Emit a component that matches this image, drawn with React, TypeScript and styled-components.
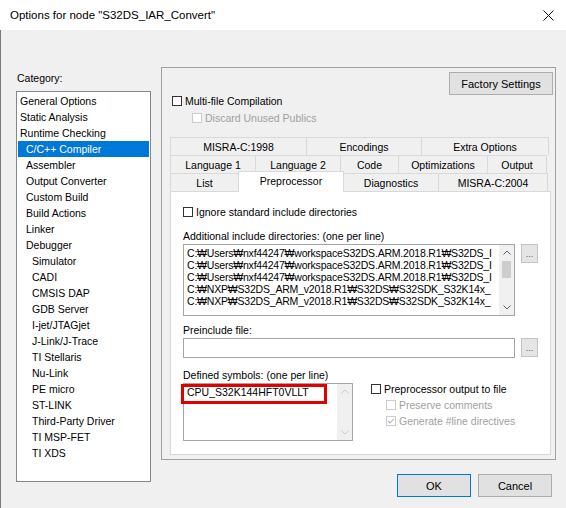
import styled, { createGlobalStyle } from 'styled-components';

const GlobalStyle = createGlobalStyle`
    html, body {
        margin: 0;
        padding: 0;
        background: #f0f0f0;
    }

    body {
        font-family: "Liberation Sans", Arial, "DejaVu Sans", sans-serif;
        font-size: 10.5px;
        color: #000;
    }
`;

interface ICategory {
    label: string;
    level: number;
    selected?: boolean;
}

const categories: ICategory[] = [
    { label: 'General Options', level: 0 },
    { label: 'Static Analysis', level: 0 },
    { label: 'Runtime Checking', level: 0 },
    { label: 'C/C++ Compiler', level: 1, selected: true },
    { label: 'Assembler', level: 1 },
    { label: 'Output Converter', level: 1 },
    { label: 'Custom Build', level: 1 },
    { label: 'Build Actions', level: 1 },
    { label: 'Linker', level: 1 },
    { label: 'Debugger', level: 1 },
    { label: 'Simulator', level: 2 },
    { label: 'CADI', level: 2 },
    { label: 'CMSIS DAP', level: 2 },
    { label: 'GDB Server', level: 2 },
    { label: 'I-jet/JTAGjet', level: 2 },
    { label: 'J-Link/J-Trace', level: 2 },
    { label: 'TI Stellaris', level: 2 },
    { label: 'Nu-Link', level: 2 },
    { label: 'PE micro', level: 2 },
    { label: 'ST-LINK', level: 2 },
    { label: 'Third-Party Driver', level: 2 },
    { label: 'TI MSP-FET', level: 2 },
    { label: 'TI XDS', level: 2 },
];

interface ITab {
    label: string;
    width: number;
    selected?: boolean;
}

const tabRows: ITab[][] = [
    [
        { label: 'MISRA-C:1998', width: 137 },
        { label: 'Encodings', width: 116 },
        { label: 'Extra Options', width: 128 },
    ],
    [
        { label: 'Language 1', width: 86 },
        { label: 'Language 2', width: 86 },
        { label: 'Code', width: 59 },
        { label: 'Optimizations', width: 90 },
        { label: 'Output', width: 60 },
    ],
    [
        { label: 'List', width: 69 },
        { label: 'Preprocessor', width: 106, selected: true },
        { label: 'Diagnostics', width: 96 },
        { label: 'MISRA-C:2004', width: 110 },
    ],
];

// only the part that is visible before the scroll bar
const includeDirs = [
    'C:₩Users₩nxf44247₩workspaceS32DS.ARM.2018.R1₩S32DS_I',
    'C:₩Users₩nxf44247₩workspaceS32DS.ARM.2018.R1₩S32DS_I',
    'C:₩Users₩nxf44247₩workspaceS32DS.ARM.2018.R1₩S32DS_I',
    'C:₩NXP₩S32DS_ARM_v2018.R1₩S32DS₩S32SDK_S32K14x_',
    'C:₩NXP₩S32DS_ARM_v2018.R1₩S32DS₩S32SDK_S32K14x_',
];

function Chevron({ up, color }: { up?: boolean; color: string }) {
    return (
        <svg width="8" height="5" viewBox="0 0 8 5">
            <path
                d={up ? 'M0.5 4.5 L4 1 L7.5 4.5' : 'M0.5 0.5 L4 4 L7.5 0.5'}
                fill="none"
                stroke={color}
                strokeWidth="1"
            />
        </svg>
    );
}

function CheckBox({
    label,
    checked,
    disabled,
}: {
    label: string;
    checked?: boolean;
    disabled?: boolean;
}) {
    return (
        <CheckRow $disabled={disabled}>
            <Box $disabled={disabled}>
                {checked && (
                    <svg width="8" height="8" viewBox="0 0 8 8">
                        <path
                            d="M1 4 L3 6 L7 1.5"
                            fill="none"
                            stroke={disabled ? '#b5b5b5' : '#222'}
                            strokeWidth="1.1"
                        />
                    </svg>
                )}
            </Box>
            <span>{label}</span>
        </CheckRow>
    );
}

function ScrollBar({ disabled }: { disabled?: boolean }) {
    const color = disabled ? '#c8c8c8' : '#606060';
    return (
        <Scroll>
            <ScrollArrow>
                <Chevron up color={color} />
            </ScrollArrow>
            <ScrollTrack>{!disabled && <Thumb />}</ScrollTrack>
            <ScrollArrow>
                <Chevron color={color} />
            </ScrollArrow>
        </Scroll>
    );
}

function App() {
    return (
        <Window>
            <GlobalStyle />
            <TitleBar>
                <span>Options for node "S32DS_IAR_Convert"</span>
                <CloseButton>
                    <svg width="11" height="11" viewBox="0 0 11 11">
                        <path d="M0.5 0.5 L10.5 10.5 M10.5 0.5 L0.5 10.5" stroke="#111" strokeWidth="1" />
                    </svg>
                </CloseButton>
            </TitleBar>
            <Body>
                <LeftColumn>
                    <CategoryLabel>Category:</CategoryLabel>
                    <CategoryList>
                        {categories.map(c => (
                            <CategoryItem key={c.label} $level={c.level} $selected={c.selected}>
                                {c.label}
                            </CategoryItem>
                        ))}
                    </CategoryList>
                </LeftColumn>
                <RightColumn>
                    <GroupBox>
                        <TopBar>
                            <Button $w={104}>Factory Settings</Button>
                        </TopBar>
                        <MultiFileRow>
                            <CheckBox label="Multi-file Compilation" />
                        </MultiFileRow>
                        <DiscardRow>
                            <CheckBox label="Discard Unused Publics" disabled />
                        </DiscardRow>
                        <Tabs>
                            {tabRows.map((row, i) => (
                                <TabRow key={i}>
                                    {row.map(t => (
                                        <Tab key={t.label} $w={t.width} $selected={t.selected}>
                                            {t.label}
                                        </Tab>
                                    ))}
                                </TabRow>
                            ))}
                            <TabPage>
                                <IgnoreRow>
                                    <CheckBox label="Ignore standard include directories" />
                                </IgnoreRow>
                                <FieldLabel $top={11}>Additional include directories: (one per line)</FieldLabel>
                                <FieldRow>
                                    <TextArea $w={332} $h={72}>
                                        <Lines $tight>
                                            {includeDirs.map((d, i) => (
                                                <Line key={i}>{d}</Line>
                                            ))}
                                        </Lines>
                                        <ScrollBar />
                                    </TextArea>
                                    <DotsButton>...</DotsButton>
                                </FieldRow>
                                <FieldLabel $top={8}>Preinclude file:</FieldLabel>
                                <FieldRow>
                                    <TextArea $w={332} $h={20} />
                                    <DotsButton>...</DotsButton>
                                </FieldRow>
                                <FieldLabel $top={11}>Defined symbols: (one per line)</FieldLabel>
                                <SymbolsRow>
                                    <TextArea $w={170} $h={58}>
                                        <Lines>
                                            <Line>CPU_S32K144HFT0VLLT</Line>
                                        </Lines>
                                        <ScrollBar disabled />
                                        <Highlight />
                                    </TextArea>
                                    <OutputOptions>
                                        <CheckBox label="Preprocessor output to file" />
                                        <SubOption>
                                            <CheckBox label="Preserve comments" disabled />
                                        </SubOption>
                                        <SubOption>
                                            <CheckBox label="Generate #line directives" checked disabled />
                                        </SubOption>
                                    </OutputOptions>
                                </SymbolsRow>
                            </TabPage>
                        </Tabs>
                    </GroupBox>
                    <Footer>
                        <Button $w={74} $default>OK</Button>
                        <Button $w={74}>Cancel</Button>
                    </Footer>
                </RightColumn>
            </Body>
        </Window>
    );
}

export default App;

const Window = styled.div`
    width: 566px;
    height: 508px;
    overflow: hidden;
    background: #f0f0f0;
`;

const TitleBar = styled.div`
    height: 30px;
    display: flex;
    align-items: center;
    justify-content: space-between;
    padding-left: 10px;
    background: #fff;
    font-size: 11.5px;
    color: #000;
`;

const CloseButton = styled.div`
    width: 36px;
    height: 30px;
    display: flex;
    align-items: center;
    justify-content: center;
`;

const Body = styled.div`
    display: flex;
    height: 478px;
    box-sizing: border-box;
    padding: 37px 0 0 15px;
    border-left: 1px solid #7a7a7a;
`;

const LeftColumn = styled.div`
    width: 135px;
    display: flex;
    flex-direction: column;
`;

const CategoryLabel = styled.div`
    height: 14px;
    line-height: 14px;
    padding: 4px 0 0 1px;
    margin-bottom: 6px;
`;

const CategoryList = styled.div`
    height: 391px;
    box-sizing: border-box;
    border: 1px solid #828790;
    background: #fff;
    padding: 1px;
`;

const CategoryItem = styled.div<{ $level: number; $selected?: boolean }>`
    height: 16px;
    line-height: 16px;
    padding-left: ${p => 2 + p.$level * 6}px;
    white-space: nowrap;
    background: ${p => (p.$selected ? '#0078d7' : 'transparent')};
    color: ${p => (p.$selected ? '#fff' : '#000')};
`;

const RightColumn = styled.div`
    width: 395px;
    margin-left: 10px;
    display: flex;
    flex-direction: column;
`;

const GroupBox = styled.div`
    height: 393px;
    box-sizing: border-box;
    border: 1px solid #a0a0a0;
    display: flex;
    flex-direction: column;
`;

const TopBar = styled.div`
    display: flex;
    justify-content: flex-end;
    padding: 4px 2px 0 0;
`;

const Button = styled.div<{ $w: number; $default?: boolean }>`
    width: ${p => p.$w}px;
    height: 23px;
    box-sizing: border-box;
    display: flex;
    align-items: center;
    justify-content: center;
    background: #e1e1e1;
    border: 1px solid ${p => (p.$default ? '#0078d7' : '#adadad')};
    font-size: 11px;
`;

const CheckRow = styled.div<{ $disabled?: boolean }>`
    display: flex;
    align-items: center;
    gap: 3px;
    height: 14px;
    white-space: nowrap;
    color: ${p => (p.$disabled ? '#a0a0a0' : '#000')};
`;

const Box = styled.span<{ $disabled?: boolean }>`
    width: 10px;
    height: 10px;
    box-sizing: border-box;
    display: flex;
    align-items: center;
    justify-content: center;
    border: 1px solid ${p => (p.$disabled ? '#cccccc' : '#333')};
    background: #fff;
`;

const MultiFileRow = styled.div`
    margin-top: -1px;
    padding-left: 10px;
`;

const DiscardRow = styled.div`
    margin-top: 3px;
    padding-left: 30px;
`;

const Tabs = styled.div`
    margin: 12px 0 0 8px;
    width: 381px;
    display: flex;
    flex-direction: column;
`;

const TabRow = styled.div`
    display: flex;
    height: 18px;
`;

const Tab = styled.div<{ $w: number; $selected?: boolean }>`
    position: relative;
    width: ${p => p.$w}px;
    box-sizing: border-box;
    display: flex;
    align-items: center;
    justify-content: center;
    border: 1px solid #d9d9d9;
    border-bottom: none;
    margin-right: -1px;
    background: ${p => (p.$selected ? '#fff' : '#f0f0f0')};
    height: ${p => (p.$selected ? 21 : 18)}px;
    margin-top: ${p => (p.$selected ? -2 : 0)}px;
    padding-bottom: ${p => (p.$selected ? 3 : 0)}px;
    z-index: ${p => (p.$selected ? 2 : 0)};

    &:last-child {
        margin-right: 0;
    }
`;

const TabPage = styled.div`
    height: 264px;
    box-sizing: border-box;
    border: 1px solid #d9d9d9;
    background: #fff;
    padding-left: 12px;
    display: flex;
    flex-direction: column;
`;

const IgnoreRow = styled.div`
    margin-top: 13px;
`;

const FieldLabel = styled.div<{ $top: number }>`
    margin-top: ${p => p.$top}px;
    height: 13px;
    line-height: 13px;
    margin-bottom: 1px;
`;

const FieldRow = styled.div`
    display: flex;
    gap: 6px;
`;

const TextArea = styled.div<{ $w: number; $h: number }>`
    position: relative;
    width: ${p => p.$w}px;
    height: ${p => p.$h}px;
    box-sizing: border-box;
    border: 1px solid #a5a5a5;
    background: #fff;
    display: flex;
`;

const Lines = styled.div<{ $tight?: boolean }>`
    flex: 1;
    min-width: 0;
    overflow: hidden;
    padding: 2px 0 0 3px;
    letter-spacing: ${p => (p.$tight ? '-0.2px' : 'normal')};
`;

const Line = styled.div`
    height: 12px;
    line-height: 12px;
    white-space: nowrap;
`;

const Scroll = styled.div`
    width: 15px;
    flex-shrink: 0;
    display: flex;
    flex-direction: column;
    background: #f0f0f0;
`;

const ScrollArrow = styled.div`
    height: 15px;
    display: flex;
    align-items: center;
    justify-content: center;
`;

const ScrollTrack = styled.div`
    flex: 1;
    display: flex;
    justify-content: center;
`;

const Thumb = styled.div`
    width: 9px;
    height: 17px;
    margin-top: 1px;
    background: #cdcdcd;
`;

const DotsButton = styled.div`
    width: 17px;
    height: 19px;
    box-sizing: border-box;
    border: 1px solid #c4c4c4;
    background: #e5e5e5;
    display: flex;
    align-items: center;
    justify-content: center;
    font-size: 9px;
    color: #555;
`;

const SymbolsRow = styled.div`
    display: flex;
    gap: 18px;
`;

const Highlight = styled.div`
    position: absolute;
    left: -3px;
    top: 0;
    width: 146px;
    height: 20px;
    box-sizing: border-box;
    border: 3px solid #e00000;
`;

const OutputOptions = styled.div`
    display: flex;
    flex-direction: column;
    gap: 2px;
    margin-top: -1px;
`;

const SubOption = styled.div`
    padding-left: 15px;
`;

const Footer = styled.div`
    display: flex;
    justify-content: flex-end;
    gap: 7px;
    margin-top: 14px;
    padding-right: 4px;
`;
